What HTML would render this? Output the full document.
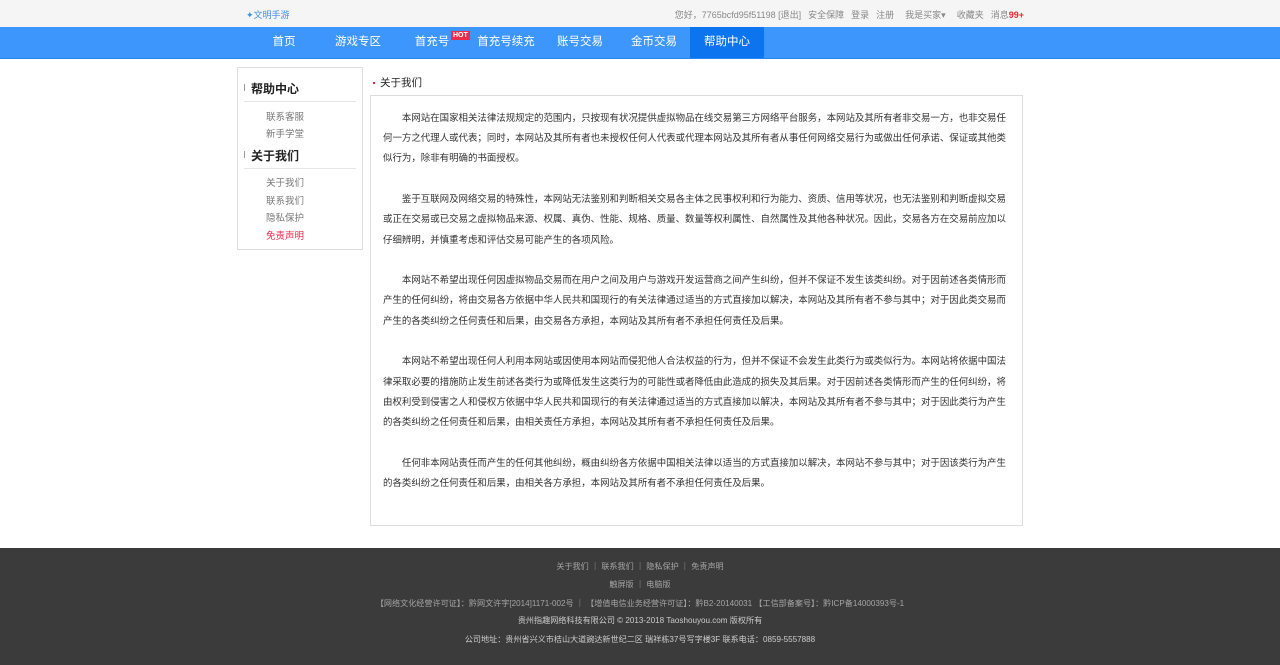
<!DOCTYPE html>
<html><head><meta charset="utf-8"><style>
*{margin:0;padding:0;box-sizing:border-box}
body{width:1280px;height:665px;overflow:hidden;font-family:"Liberation Sans","Noto Sans CJK SC",sans-serif;background:#fff;position:relative;color:#333}
.top{height:27px;background:#f5f5f5;position:relative;font-size:9px;color:#888}
.top .logo{position:absolute;left:246px;top:8px;color:#3d8fe8}
.top .r{position:absolute;right:256px;top:8px;white-space:nowrap}
.top .r span{margin-left:7px}
.nav{height:32px;background:#3d96fb;position:absolute;top:27px;left:0;width:1280px;border-bottom:1px solid #2d86ee}
.nav a{position:absolute;top:0;height:31px;line-height:31px;color:#fff;font-size:11.5px;text-align:center}
.nav .act{background:#0d74f0}
.hot{position:absolute;left:451px;top:31px;background:#ea2e4a;color:#fff;font-size:7px;font-weight:bold;padding:0 2px;line-height:9px}
.side{position:absolute;left:237px;top:67px;width:126px;height:183px;border:1px solid #ddd}
.side h3{position:absolute;left:13px;font-size:12px;font-weight:bold;color:#222}
.side h3:before{content:"";position:absolute;left:-7px;top:4px;width:1px;height:7px;background:#999}
.side .ln{position:absolute;left:6px;width:112px;height:1px;background:#e5e5e5}
.side a{position:absolute;left:28px;font-size:9.5px;color:#777}
.ttl{position:absolute;left:373px;top:75px;font-size:10.5px;color:#222}
.ttl:before{content:"";display:inline-block;width:2px;height:2px;background:#e4262d;margin-right:5px;vertical-align:middle}
.box{position:absolute;left:370px;top:95px;width:653px;height:431px;border:1px solid #ddd;padding:13px 10px 0 12px;font-size:9.45px;line-height:20.2px;color:#333}
.box p{text-indent:2em;margin-bottom:20.5px}
.foot{position:absolute;left:0;top:548px;width:1280px;height:117px;background:#3b3b3b;text-align:center;font-size:8.1px;color:#a5a5a5}
.foot div{position:absolute;left:0;width:1280px}
</style></head><body>
<div class="top"><span class="logo">✦文明手游</span>
<div class="r">您好，7765bcfd95f51198 [退出]<span>安全保障</span><span>登录</span><span>注册</span><span style="margin-left:11px">我是买家▾</span><span style="margin-left:11px">收藏夹</span><span>消息<b style="color:#e4262d">99+</b></span></div></div>
<div class="nav">
<a style="left:258px;width:52px">首页</a>
<a style="left:330px;width:56px">游戏专区</a>
<a style="left:410px;width:44px">首充号</a>
<a style="left:474px;width:64px">首充号续充</a>
<a style="left:553px;width:54px">账号交易</a>
<a style="left:627px;width:54px">金币交易</a>
<a class="act" style="left:690px;width:74px">帮助中心</a>
</div>
<span class="hot">HOT</span>
<div class="side">
<h3 style="top:12px">帮助中心</h3><div class="ln" style="top:33px"></div>
<a style="top:41px">联系客服</a><a style="top:58px">新手学堂</a>
<h3 style="top:79px">关于我们</h3><div class="ln" style="top:100px"></div>
<a style="top:107px">关于我们</a><a style="top:125px">联系我们</a><a style="top:142px">隐私保护</a><a style="top:160px;color:#f0284a">免责声明</a>
</div>
<div class="ttl">关于我们</div>
<div class="box">
<p>本网站在国家相关法律法规规定的范围内，只按现有状况提供虚拟物品在线交易第三方网络平台服务，本网站及其所有者非交易一方，也非交易任何一方之代理人或代表；同时，本网站及其所有者也未授权任何人代表或代理本网站及其所有者从事任何网络交易行为或做出任何承诺、保证或其他类似行为，除非有明确的书面授权。</p>
<p>鉴于互联网及网络交易的特殊性，本网站无法鉴别和判断相关交易各主体之民事权利和行为能力、资质、信用等状况，也无法鉴别和判断虚拟交易或正在交易或已交易之虚拟物品来源、权属、真伪、性能、规格、质量、数量等权利属性、自然属性及其他各种状况。因此，交易各方在交易前应加以仔细辨明，并慎重考虑和评估交易可能产生的各项风险。</p>
<p>本网站不希望出现任何因虚拟物品交易而在用户之间及用户与游戏开发运营商之间产生纠纷，但并不保证不发生该类纠纷。对于因前述各类情形而产生的任何纠纷，将由交易各方依据中华人民共和国现行的有关法律通过适当的方式直接加以解决，本网站及其所有者不参与其中；对于因此类交易而产生的各类纠纷之任何责任和后果，由交易各方承担，本网站及其所有者不承担任何责任及后果。</p>
<p>本网站不希望出现任何人利用本网站或因使用本网站而侵犯他人合法权益的行为，但并不保证不会发生此类行为或类似行为。本网站将依据中国法律采取必要的措施防止发生前述各类行为或降低发生这类行为的可能性或者降低由此造成的损失及其后果。对于因前述各类情形而产生的任何纠纷，将由权利受到侵害之人和侵权方依据中华人民共和国现行的有关法律通过适当的方式直接加以解决，本网站及其所有者不参与其中；对于因此类行为产生的各类纠纷之任何责任和后果，由相关责任方承担，本网站及其所有者不承担任何责任及后果。</p>
<p>任何非本网站责任而产生的任何其他纠纷，概由纠纷各方依据中国相关法律以适当的方式直接加以解决，本网站不参与其中；对于因该类行为产生的各类纠纷之任何责任和后果，由相关各方承担，本网站及其所有者不承担任何责任及后果。</p>
</div>
<div class="foot">
<div style="top:13px">关于我们 ｜ 联系我们 ｜ 隐私保护 ｜ 免责声明</div>
<div style="top:31px">触屏版 ｜ 电脑版</div>
<div style="top:50px">【网络文化经营许可证】：黔网文许字[2014]1171-002号 ｜ 【增值电信业务经营许可证】：黔B2-20140031 【工信部备案号】：黔ICP备14000393号-1</div>
<div style="top:67px;color:#ccc">贵州指趣网络科技有限公司 © 2013-2018 Taoshouyou.com 版权所有</div>
<div style="top:86px;color:#ccc">公司地址：贵州省兴义市桔山大道豌达新世纪二区 瑞祥栋37号写字楼3F 联系电话：0859-5557888</div>
</div>
</body></html>
